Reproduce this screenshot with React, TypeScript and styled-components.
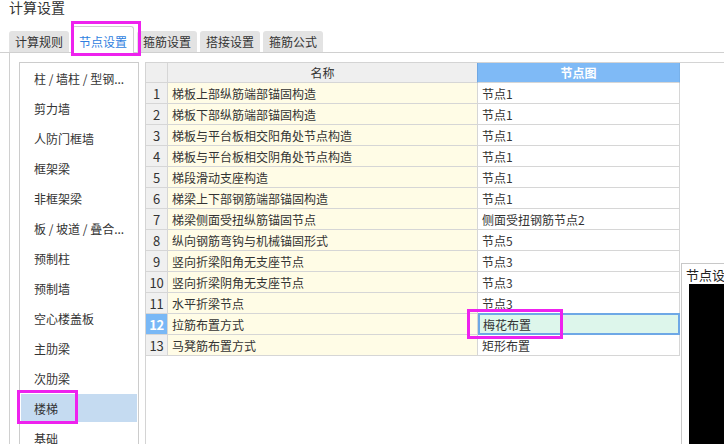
import React from "react";
import styled, { createGlobalStyle, css } from "styled-components";

const GlobalStyle = createGlobalStyle`
  html, body {
    margin: 0;
    padding: 0;
    background: #ffffff;
  }
  * {
    box-sizing: border-box;
  }
`;

const Page = styled.div`
  position: relative;
  width: 724px;
  height: 444px;
  overflow: hidden;
  background: #ffffff;
  font-family: "Noto Sans CJK SC", "Microsoft YaHei", sans-serif;
  font-size: 12px;
  color: #333333;
  display: flex;
  flex-direction: column;
`;

const Title = styled.div`
  height: 17px;
  padding-left: 9px;
  font-size: 14px;
  line-height: 15px;
  color: #333333;
`;

const TabBar = styled.div`
  display: flex;
  align-items: flex-end;
  gap: 3px;
  height: 36px;
  padding-left: 9px;
  border-bottom: 1px solid #d0d0d0;
`;

const Tab = styled.div<{ $active?: boolean }>`
  height: 21px;
  padding: 0 6px;
  display: flex;
  align-items: center;
  justify-content: center;
  line-height: 1;
  background: #e3e3e3;
  border-radius: 3px 3px 0 0;
  color: #333333;
  ${(p) =>
    p.$active &&
    css`
      height: 27px;
      padding-top: 4px;
      background: #ffffff;
      color: #2f7fe0;
      border: 1px solid #cfcfcf;
      border-bottom: none;
      margin-bottom: -1px;
    `}
`;

const Body = styled.div`
  flex: 1;
  display: flex;
  gap: 6px;
  margin-left: 9px;
  padding: 9px 0 0 9px;
  border-left: 1px solid #d0d0d0;
  min-height: 0;
`;

const SideList = styled.div`
  width: 120px;
  flex: none;
  border: 1px solid #cccccc;
  border-bottom: none;
  padding: 0 1px;
  display: flex;
  flex-direction: column;
`;

const SideItem = styled.div<{ $active?: boolean }>`
  flex: none;
  height: 28px;
  margin: 1px 0;
  padding-left: 13px;
  display: flex;
  align-items: center;
  white-space: nowrap;
  color: #333333;
  background: ${(p) => (p.$active ? "#c5dbf1" : "transparent")};
`;

const GridWrap = styled.div`
  flex: 1;
  min-width: 0;
  border-left: 1px solid #d4d4d4;
  border-top: 1px solid #d4d4d4;
  overflow: hidden;
`;

const Grid = styled.div`
  display: grid;
  grid-template-columns: 22px 310px 202px;
  width: 534px;
`;

const HeadCell = styled.div<{ $blue?: boolean }>`
  height: 20px;
  display: flex;
  align-items: center;
  justify-content: center;
  border-right: 1px solid #d6d6d6;
  border-bottom: 1px solid #d6d6d6;
  background: ${(p) => (p.$blue ? "#7fbaf6" : "#efefef")};
  color: ${(p) => (p.$blue ? "#ffffff" : "#333333")};
  font-weight: ${(p) => (p.$blue ? 700 : 400)};
  ${(p) =>
    p.$blue &&
    css`
      border-right-color: #78b1ea;
      border-left: 1px solid #6fa7e3;
      margin-left: -1px;
    `}
`;

const NumCell = styled.div<{ $active?: boolean }>`
  height: 21px;
  display: flex;
  align-items: center;
  justify-content: center;
  border-right: 1px solid #d6d6d6;
  border-bottom: 1px solid #d6d6d6;
  background: ${(p) => (p.$active ? "#79b8f6" : "#f0f0f0")};
  color: ${(p) => (p.$active ? "#ffffff" : "#333333")};
  font-weight: ${(p) => (p.$active ? 700 : 400)};
  font-size: 13px;
  letter-spacing: -0.3px;
`;

const NameCell = styled.div`
  height: 21px;
  padding-left: 4px;
  display: flex;
  align-items: center;
  white-space: nowrap;
  border-right: 1px solid #d6d6d6;
  border-bottom: 1px solid #d6d6d6;
  background: #fffce6;
`;

const NodeCell = styled.div<{ $active?: boolean }>`
  height: 21px;
  padding-left: 4px;
  display: flex;
  align-items: center;
  white-space: nowrap;
  border-right: 1px solid #d6d6d6;
  border-bottom: 1px solid #d6d6d6;
  background: #ffffff;
  ${(p) =>
    p.$active &&
    css`
      background: #ddf6eb;
      border: 2px solid #6ea8e6;
      margin-top: -1px;
      height: 22px;
      padding-left: 3px;
    `}
`;

const Preview = styled.div`
  position: absolute;
  left: 681px;
  top: 263px;
  width: 60px;
  height: 200px;
  border: 1px solid #c8c8c8;
  background: #ffffff;
  display: flex;
  flex-direction: column;
`;

const PreviewTitle = styled.div`
  height: 20px;
  padding-left: 4px;
  display: flex;
  align-items: center;
  white-space: nowrap;
  font-size: 13px;
  color: #222222;
`;

const PreviewCanvas = styled.div`
  flex: 1;
  margin-left: 7px;
  background: #000000;
`;

const Mark = styled.div`
  position: absolute;
  border: 3px solid #ee22ee;
  pointer-events: none;
`;

const tabs = ["计算规则", "节点设置", "箍筋设置", "搭接设置", "箍筋公式"];

const sideItems = [
  "柱 / 墙柱 / 型钢...",
  "剪力墙",
  "人防门框墙",
  "框架梁",
  "非框架梁",
  "板 / 坡道 / 叠合...",
  "预制柱",
  "预制墙",
  "空心楼盖板",
  "主肋梁",
  "次肋梁",
  "楼梯",
  "基础",
];

const rows: [string, string][] = [
  ["梯板上部纵筋端部锚固构造", "节点1"],
  ["梯板下部纵筋端部锚固构造", "节点1"],
  ["梯板与平台板相交阳角处节点构造", "节点1"],
  ["梯板与平台板相交阴角处节点构造", "节点1"],
  ["梯段滑动支座构造", "节点1"],
  ["梯梁上下部钢筋端部锚固构造", "节点1"],
  ["梯梁侧面受扭纵筋锚固节点", "侧面受扭钢筋节点2"],
  ["纵向钢筋弯钩与机械锚固形式", "节点5"],
  ["竖向折梁阳角无支座节点", "节点3"],
  ["竖向折梁阴角无支座节点", "节点3"],
  ["水平折梁节点", "节点3"],
  ["拉筋布置方式", "梅花布置"],
  ["马凳筋布置方式", "矩形布置"],
];

const activeRow = 11;

export default function App() {
  return (
    <>
      <GlobalStyle />
      <Page>
        <Title>计算设置</Title>
        <TabBar>
          {tabs.map((t, i) => (
            <Tab key={t} $active={i === 1}>
              {t}
            </Tab>
          ))}
        </TabBar>
        <Body>
          <SideList>
            {sideItems.map((s) => (
              <SideItem key={s} $active={s === "楼梯"}>
                {s}
              </SideItem>
            ))}
          </SideList>
          <GridWrap>
            <Grid>
              <HeadCell />
              <HeadCell>名称</HeadCell>
              <HeadCell $blue>节点图</HeadCell>
              {rows.map(([name, node], i) => (
                <React.Fragment key={name}>
                  <NumCell $active={i === activeRow}>{i + 1}</NumCell>
                  <NameCell>{name}</NameCell>
                  <NodeCell $active={i === activeRow}>{node}</NodeCell>
                </React.Fragment>
              ))}
            </Grid>
          </GridWrap>
        </Body>

        <Preview>
          <PreviewTitle>节点设置</PreviewTitle>
          <PreviewCanvas />
        </Preview>

        <Mark style={{ left: 71, top: 21, width: 70, height: 35 }} />
        <Mark style={{ left: 17, top: 390, width: 61, height: 34 }} />
        <Mark style={{ left: 467, top: 309, width: 96, height: 30 }} />
      </Page>
    </>
  );
}
